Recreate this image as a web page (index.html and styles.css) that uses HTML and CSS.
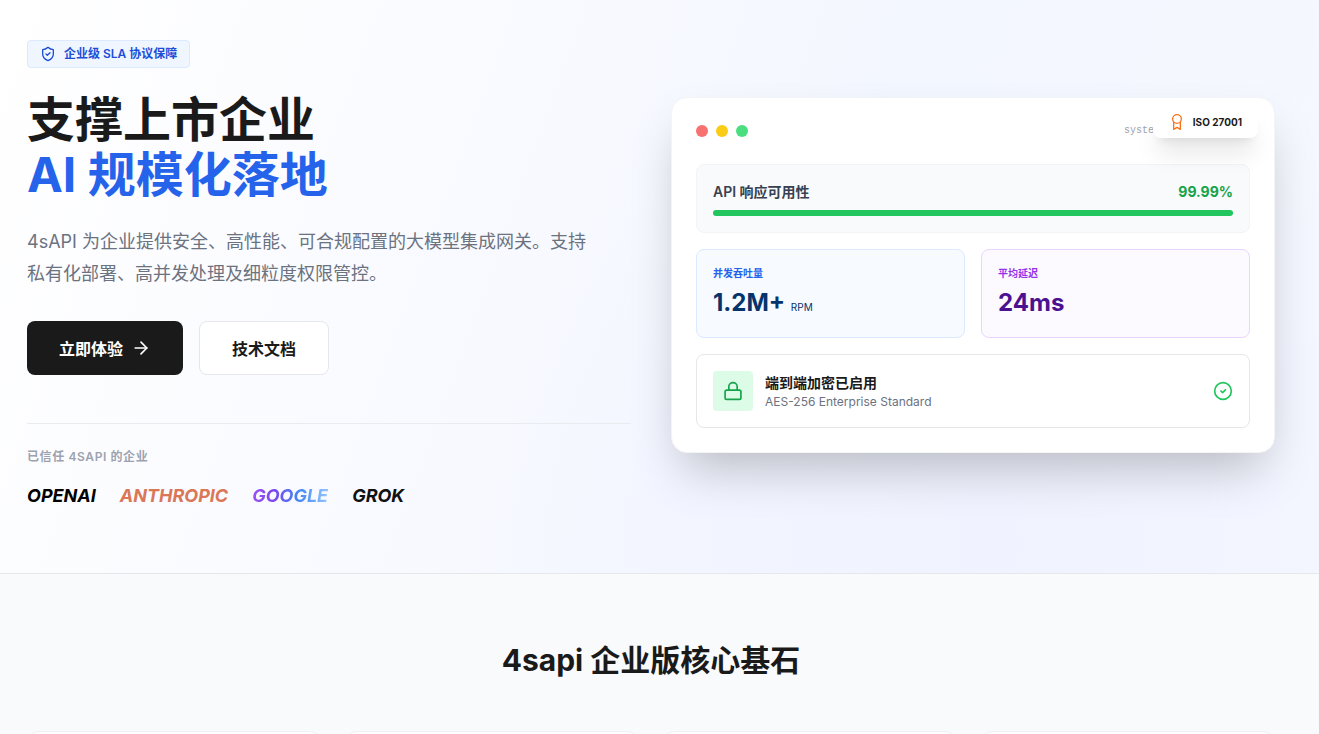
FILE: index.html
```html
<!DOCTYPE html>
<html lang="zh-CN">
<head>
    <meta charset="UTF-8">
    <meta name="viewport" content="width=device-width, initial-scale=1.0">
    <title>4sAPI 企业版</title>
    <link rel="stylesheet" href="styles.css">
</head>
<body>

    <section class="hero">
        <div class="container hero-grid">
            <div class="hero-text">
                <div class="sla-badge">
                    <svg class="icon" width="16" height="16" viewBox="0 0 24 24"><path d="M12 22s8-3.500 8-10V5.500c-3 0-5.500-1-8-3.500-2.500 2.500-5 3.500-8 3.500V12c0 6.500 8 10 8 10z"/><path d="m9 12 2 2 4-4"/></svg>
                    <span>企业级 SLA 协议保障</span>
                </div>
                <h1>支撑上市企业<br><span class="blue">AI 规模化落地</span></h1>
                <p class="lead">4sAPI 为企业提供安全、高性能、可合规配置的大模型集成网关。支持私有化部署、高并发处理及细粒度权限管控。</p>
                <div class="actions">
                    <button type="button" class="btn btn-dark">
                        立即体验
                        <svg class="icon" width="20" height="20" viewBox="0 0 24 24"><path d="M5 12h14"/><path d="m12 5 7 7-7 7"/></svg>
                    </button>
                    <button type="button" class="btn btn-light">技术文档</button>
                </div>
                <div class="trusted">
                    <p class="trusted-label">已信任 4SAPI 的企业</p>
                    <div class="brands">
                        <span class="openai">OPENAI</span>
                        <span class="anthropic">ANTHROPIC</span>
                        <span class="google">GOOGLE</span>
                        <span class="grok">GROK</span>
                    </div>
                </div>
            </div>

            <div class="panel">
                <div class="panel-head">
                    <div class="dots">
                        <span class="dot red"></span>
                        <span class="dot yellow"></span>
                        <span class="dot green"></span>
                    </div>
                    <span class="panel-name">system_status_monitor</span>
                </div>

                <div class="uptime">
                    <div class="uptime-row">
                        <span>API 响应可用性</span>
                        <span class="uptime-value">99.99%</span>
                    </div>
                    <div class="bar"></div>
                </div>

                <div class="stats">
                    <div class="stat stat-blue">
                        <div class="stat-label">并发吞吐量</div>
                        <div class="stat-value">1.2M+ <span class="unit">RPM</span></div>
                    </div>
                    <div class="stat stat-purple">
                        <div class="stat-label">平均延迟</div>
                        <div class="stat-value">24ms</div>
                    </div>
                </div>

                <div class="secure">
                    <div class="lock">
                        <svg class="icon" width="20" height="20" viewBox="0 0 24 24"><rect x="2.500" y="11" width="19" height="11" rx="2"/><path d="M7 11V7a5 5 0 0 1 10 0v4"/></svg>
                    </div>
                    <div class="secure-text">
                        <div class="secure-title">端到端加密已启用</div>
                        <div class="secure-sub">AES-256 Enterprise Standard</div>
                    </div>
                    <svg class="icon check" width="20" height="20" viewBox="0 0 24 24"><circle cx="12" cy="12" r="10"/><path d="m9.500 12 2 2 3.500-3.500"/></svg>
                </div>

                <div class="iso">
                    <svg class="icon" width="16" height="16" viewBox="0 0 24 24"><circle cx="12" cy="7.500" r="6.500"/><path d="M7 12.500V23l5-3 5 3V12.500"/></svg>
                    <span>ISO 27001</span>
                </div>
            </div>
        </div>
    </section>

    <section class="features">
        <div class="container">
            <h2>4sapi 企业版核心基石</h2>
            <div class="feature-grid">
                <div class="feature"></div>
                <div class="feature"></div>
                <div class="feature"></div>
                <div class="feature"></div>
            </div>
        </div>
    </section>

</body>
</html>
```
FILE: styles.css
```css
* {
    box-sizing: border-box;
}

body {
    margin: 0;
    font-family: Inter, "Noto Sans CJK SC", sans-serif;
    line-height: 1.5;
    color: #1a1a1a;
    background-color: #f9fafc;
    overflow: hidden;
}

h1, h2, p {
    margin: 0;
}

.icon {
    fill: none;
    stroke: currentColor;
    stroke-width: 2;
    stroke-linecap: round;
    stroke-linejoin: round;
    flex-shrink: 0;
}

.container {
    max-width: 1302px;
    padding: 0 27px;
}

/* hero */
.hero {
    padding: 40px 0 63px;
    border-bottom: 1px solid #e5e7eb;
    background: radial-gradient(circle at 75% 95%, #f0f3ff 0%, rgba(240, 243, 255, 0) 45%), linear-gradient(110deg, #ffffff 0%, #f9faff 35%, #f3f7ff 60%, #f5f8ff 100%);
}

.hero-grid {
    display: grid;
    grid-template-columns: 1fr 1fr;
    gap: 40px;
    align-items: center;
}

.sla-badge {
    display: inline-flex;
    align-items: center;
    gap: 8px;
    padding: 4px 12px;
    margin-bottom: 24px;
    font-size: 12px;
    line-height: 18px;
    font-weight: 600;
    color: #1d4ed8;
    background-color: #eff6ff;
    border: 1px solid #dbeafe;
    border-radius: 4px;
    vertical-align: top;
}

h1 {
    margin-bottom: 24px;
    font-size: 48px;
    line-height: 55px;
    font-weight: 700;
}

.blue {
    color: #2563eb;
}

.lead {
    margin-bottom: 31px;
    max-width: 576px;
    font-size: 18px;
    line-height: 32px;
    color: #6b7280;
}

.actions {
    display: flex;
    gap: 16px;
}

.btn {
    display: flex;
    align-items: center;
    gap: 8px;
    height: 54px;
    padding: 0 32px;
    font-family: inherit;
    font-size: 16px;
    font-weight: 700;
    border: none;
    border-radius: 8px;
    cursor: pointer;
}

.btn-dark {
    color: #ffffff;
    background-color: #1a1a1a;
}

.btn-light {
    color: #1a1a1a;
    background-color: #ffffff;
    border: 1px solid #e5e7eb;
}

.trusted {
    margin-top: 48px;
    padding-top: 24px;
    border-top: 1px solid #e9ebef;
}

.trusted-label {
    margin-bottom: 16px;
    font-size: 12px;
    line-height: 18px;
    font-weight: 600;
    letter-spacing: 0.05em;
    color: #9ca3af;
}

.brands {
    display: flex;
    gap: 24px;
    font-size: 18px;
    line-height: 28px;
    font-weight: 700;
    font-style: italic;
}

.openai {
    color: #000000;
}

.anthropic {
    color: #d97757;
}

.google {
    color: transparent;
    background: linear-gradient(90deg, #9b51f5 0%, #7846f0 30%, #4285f4 60%, #93c5fd 100%);
    -webkit-background-clip: text;
    background-clip: text;
}

.grok {
    color: #111111;
}

/* status panel */
.panel {
    position: relative;
    padding: 24px;
    background-color: #ffffff;
    border: 1px solid #f3f4f6;
    border-radius: 16px;
    box-shadow: 0 25px 50px -12px rgba(0, 0, 0, 0.25);
}

.panel-head {
    display: flex;
    align-items: center;
    justify-content: space-between;
    height: 18px;
    margin-bottom: 24px;
}

.dots {
    display: flex;
    gap: 8px;
}

.dot {
    width: 12px;
    height: 12px;
    border-radius: 50%;
}

.red {
    background-color: #f87171;
}

.yellow {
    background-color: #facc15;
}

.green {
    background-color: #4ade80;
}

.panel-name {
    font-family: "Liberation Mono", monospace;
    font-size: 10px;
    line-height: 18px;
    color: #9ca3af;
}

.uptime {
    padding: 16px;
    margin-bottom: 16px;
    background-color: #f9fafb;
    border: 1px solid #f3f4f6;
    border-radius: 8px;
}

.uptime-row {
    display: flex;
    justify-content: space-between;
    margin-bottom: 8px;
    font-size: 14px;
    line-height: 21px;
    font-weight: 600;
    color: #374151;
}

.uptime-value {
    font-weight: 700;
    color: #16a34a;
}

.bar {
    height: 6px;
    background-color: #22c55e;
    border-radius: 3px;
}

.stats {
    display: grid;
    grid-template-columns: 1fr 1fr;
    gap: 16px;
    margin-bottom: 16px;
}

.stat {
    padding: 16px;
    border: 1px solid;
    border-radius: 8px;
}

.stat-blue {
    background-color: #f7faff;
    border-color: #dbeafe;
}

.stat-purple {
    background-color: #fcfaff;
    border-color: #e9d5ff;
}

.stat-label {
    margin-bottom: 4px;
    font-size: 10px;
    line-height: 15px;
    font-weight: 700;
}

.stat-value {
    font-size: 24px;
    line-height: 36px;
    font-weight: 700;
}

.stat-blue .stat-label {
    color: #2563eb;
}

.stat-blue .stat-value {
    color: #05336b;
}

.stat-purple .stat-label {
    color: #9333ea;
}

.stat-purple .stat-value {
    color: #4c1191;
}

.unit {
    font-size: 10px;
    line-height: 15px;
    font-weight: 400;
}

.secure {
    display: flex;
    align-items: center;
    gap: 12px;
    padding: 16px;
    border: 1px solid #e5e7eb;
    border-radius: 8px;
}

.lock {
    display: flex;
    align-items: center;
    justify-content: center;
    width: 40px;
    height: 40px;
    color: #16a34a;
    background-color: #dcfce7;
    border-radius: 4px;
}

.secure-text {
    flex: 1;
}

.secure-title {
    font-size: 14px;
    line-height: 21px;
    font-weight: 700;
}

.secure-sub {
    font-size: 12px;
    line-height: 18px;
    color: #6b7280;
}

.check {
    color: #22c55e;
}

.iso {
    position: absolute;
    top: 8px;
    right: 16px;
    display: flex;
    align-items: center;
    gap: 8px;
    padding: 8px 16px;
    font-size: 10px;
    line-height: 16px;
    font-weight: 700;
    background-color: #ffffff;
    border-radius: 8px;
    box-shadow: 0 20px 25px -5px rgba(0, 0, 0, 0.1), 0 8px 10px -6px rgba(0, 0, 0, 0.1);
}

.iso .icon {
    color: #f97316;
}

/* features */
.features {
    padding: 64px 0;
}

h2 {
    margin-bottom: 48px;
    font-size: 30px;
    line-height: 45px;
    font-weight: 700;
    text-align: center;
}

.feature-grid {
    display: grid;
    grid-template-columns: repeat(4, 1fr);
    gap: 24px;
}

.feature {
    height: 240px;
    background-color: #ffffff;
    border: 1px solid #f0f1f4;
    border-radius: 12px;
}
```
